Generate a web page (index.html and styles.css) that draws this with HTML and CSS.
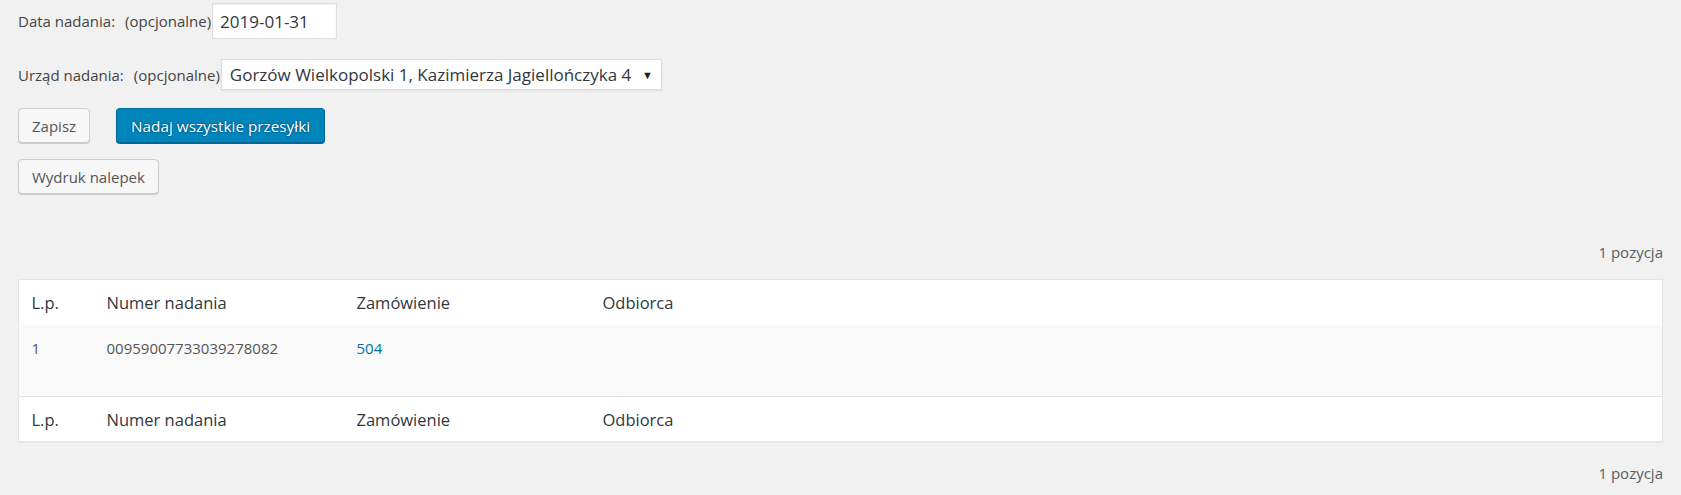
FILE: index.html
```html
<!DOCTYPE html>
<html lang="pl">
<head>
    <meta charset="UTF-8">
    <meta name="viewport" content="width=device-width, initial-scale=1.0">
    <title>Nadawanie przesyłek</title>
    <link rel="stylesheet" href="styles.css">
</head>
<body>
    <div class="wrap">
        <p class="field field-date">
            <label for="data">Data nadania:</label>
            <span class="optional">(opcjonalne)</span>
            <input type="text" id="data" class="date-input" value="2019-01-31">
        </p>

        <p class="field field-office">
            <label for="urzad">Urząd nadania:</label>
            <span class="optional">(opcjonalne)</span>
            <span class="select-wrap">
                <select id="urzad" class="office-select">
                    <option selected>Gorzów Wielkopolski 1, Kazimierza Jagiellończyka 4</option>
                </select>
            </span>
        </p>

        <div class="actions">
            <button type="button" class="button">Zapisz</button>
            <button type="button" class="button button-primary">Nadaj wszystkie przesyłki</button>
        </div>

        <div class="actions actions-print">
            <button type="button" class="button">Wydruk nalepek</button>
        </div>

        <div class="tablenav tablenav-top">1 pozycja</div>

        <table class="shipments">
            <colgroup>
                <col class="col-lp">
                <col class="col-number">
                <col class="col-order">
                <col>
            </colgroup>
            <thead>
                <tr>
                    <th>L.p.</th>
                    <th>Numer nadania</th>
                    <th>Zamówienie</th>
                    <th>Odbiorca</th>
                </tr>
            </thead>
            <tbody>
                <tr>
                    <td>1</td>
                    <td>00959007733039278082</td>
                    <td><a href="#">504</a></td>
                    <td></td>
                </tr>
            </tbody>
            <tfoot>
                <tr>
                    <th>L.p.</th>
                    <th>Numer nadania</th>
                    <th>Zamówienie</th>
                    <th>Odbiorca</th>
                </tr>
            </tfoot>
        </table>

        <div class="tablenav tablenav-bottom">1 pozycja</div>
    </div>
</body>
</html>
```

FILE: styles.css
```css
* {
    box-sizing: border-box;
}
body {
    margin: 0;
    background-color: #f1f1f1;
    color: #444;
    font-family: "Open Sans", "Noto Sans", sans-serif;
    font-size: 15px;
}
.wrap {
    padding: 3px 18px 0;
}
.field {
    display: flex;
    align-items: center;
    margin: 0;
}
.field label {
    margin-right: 10px;
}
.optional {
    margin-right: 1px;
}
.date-input {
    width: 125px;
    height: 36px;
    padding: 0 7px;
    border: 1px solid #ddd;
    box-shadow: inset 0 1px 2px rgba(0, 0, 0, 0.07);
    background: #fff;
    color: #32373c;
    font-family: inherit;
    font-size: 17px;
}
.field-office {
    margin-top: 20px;
}
.select-wrap {
    position: relative;
    display: block;
}
.office-select {
    display: block;
    width: 441px;
    height: 31px;
    padding: 0 0 0 8px;
    border: 1px solid #ddd;
    box-shadow: 0 1px 2px rgba(0, 0, 0, 0.07);
    background: #fff;
    color: #32373c;
    font-family: inherit;
    font-size: 17px;
    appearance: none;
    -webkit-appearance: none;
}
.select-wrap::after {
    content: "\25BC";
    position: absolute;
    right: 9px;
    top: 8px;
    font-size: 11px;
    color: #222;
    pointer-events: none;
}
.actions {
    display: flex;
    gap: 26px;
    margin-top: 18px;
}
.actions-print {
    margin-top: 16px;
}
.button {
    height: 35px;
    padding: 0 13px;
    border: 1px solid #ccc;
    border-radius: 4px;
    box-shadow: 0 1px 0 #ccc;
    background: #f7f7f7;
    color: #555;
    font-family: inherit;
    font-size: 15px;
    cursor: pointer;
}
.button-primary {
    padding: 0 14px;
    font-size: 15.3px;
    background: #0085ba;
    border-color: #0073aa #006799 #006799;
    box-shadow: 0 1px 0 #006799;
    color: #fff;
    text-shadow: 0 -1px 1px #006799, 1px 0 1px #006799, 0 1px 1px #006799, -1px 0 1px #006799;
}
.tablenav {
    text-align: right;
    line-height: 24px;
    color: #555d66;
}
.tablenav-top {
    margin-top: 46px;
    margin-bottom: 15px;
}
.tablenav-bottom {
    margin-top: 19px;
}
.shipments {
    width: 100%;
    table-layout: fixed;
    border-spacing: 0;
    border: 1px solid #e5e5e5;
    box-shadow: 0 1px 1px rgba(0, 0, 0, 0.04);
    background: #fff;
}
.col-lp {
    width: 75px;
}
.col-number {
    width: 250px;
}
.col-order {
    width: 246px;
}
.shipments th {
    height: 45px;
    padding: 0 12.5px;
    text-align: left;
    font-weight: normal;
    font-size: 16.5px;
    color: #32373c;
}
.shipments tfoot th {
    height: 45px;
    border-top: 1px solid #e1e1e1;
}
.shipments td {
    height: 71px;
    padding: 11px 12.5px 0;
    vertical-align: top;
    line-height: 24px;
    background: #f9f9f9;
    color: #555;
}
.shipments a {
    color: #0073aa;
    text-decoration: none;
}
```
